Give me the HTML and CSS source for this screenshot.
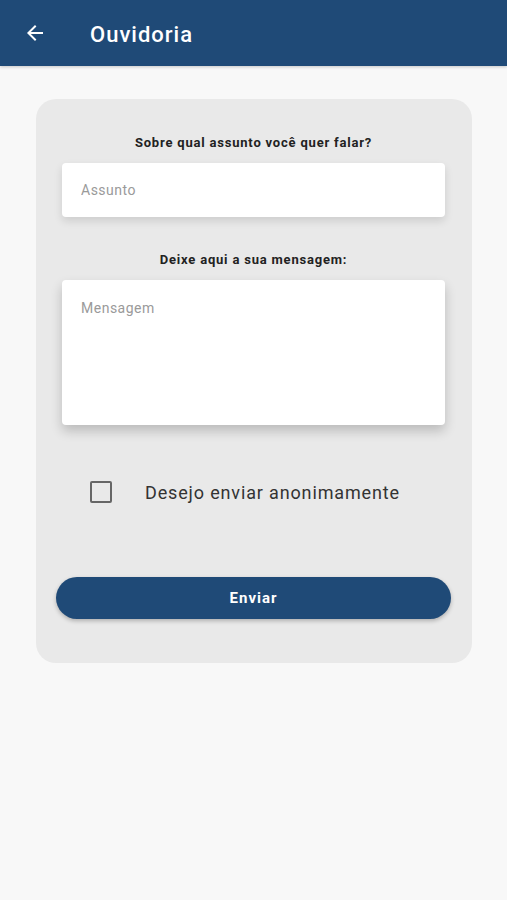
FILE: index.html
```html
<!DOCTYPE html>
<html lang="pt-BR">
<head>
  <meta charset="UTF-8">
  <meta name="viewport" content="width=device-width, initial-scale=1.0">
  <title>Ouvidoria</title>
  <link rel="stylesheet" href="styles.css">
</head>
<body>
  <header class="topbar">
    <button class="back" aria-label="Voltar">
      <svg width="24" height="24" viewBox="0 0 24 24"><path d="M20 11H7.83l5.59-5.59L12 4l-8 8 8 8 1.41-1.41L7.83 13H20v-2z" fill="#fff"/></svg>
    </button>
    <h1>Ouvidoria</h1>
  </header>

  <main class="content">
    <form class="card">
      <label class="label" for="assunto">Sobre qual assunto você quer falar?</label>
      <input class="field" type="text" id="assunto" placeholder="Assunto">

      <label class="label label-msg" for="mensagem">Deixe aqui a sua mensagem:</label>
      <textarea class="field area" id="mensagem" placeholder="Mensagem"></textarea>

      <label class="check">
        <span class="box"></span>
        <span>Desejo enviar anonimamente</span>
      </label>

      <button class="send" type="button">Enviar</button>
    </form>
  </main>
</body>
</html>
```

FILE: styles.css
```css
body {
  margin: 0;
  background: #f8f8f8;
  font-family: Roboto, "Noto Sans", sans-serif;
  color: #222;
}
.topbar {
  height: 66px;
  background: #1f4a77;
  display: flex;
  align-items: center;
  padding: 0 0 0 23px;
  box-shadow: 0 1px 3px rgba(0,0,0,0.2);
}
.back {
  background: none;
  border: none;
  padding: 0;
  width: 24px;
  height: 24px;
  display: flex;
}
.topbar h1 {
  margin: 2px 0 0 43px;
  color: #fff;
  font-size: 22px;
  font-weight: 500;
  letter-spacing: 1px;
}
.content {
  padding: 33px 35px 0 36px;
}
.card {
  background: #e9e9e9;
  border-radius: 20px;
  padding: 37px 27px 44px 26px;
  display: flex;
  flex-direction: column;
}
.label {
  text-align: center;
  font-size: 13px;
  font-weight: 700;
  color: #222;
  line-height: 14px;
  letter-spacing: 0.8px;
}
.label-msg {
  margin-top: 36px;
}
.field {
  margin-top: 13px;
  height: 54px;
  box-sizing: border-box;
  border: none;
  border-radius: 4px;
  background: #fff;
  padding: 0 19px;
  font-family: inherit;
  font-size: 14px;
  letter-spacing: 0.5px;
  color: #333;
  box-shadow: 0 4px 8px rgba(0,0,0,0.12);
  outline: none;
}
.field::placeholder {
  color: #9a9a9a;
}
.area {
  height: 145px;
  padding: 20px 19px;
  resize: none;
  box-shadow: 0 6px 12px rgba(0,0,0,0.2);
}
.check {
  display: flex;
  align-items: center;
  margin: 56px 0 0 28px;
  font-size: 18px;
  color: #333;
  letter-spacing: 0.85px;
}
.box {
  width: 18px;
  height: 18px;
  border: 2px solid #666;
  border-radius: 2px;
  margin-right: 33px;
}
.send {
  margin: 74px -6px 0 -6px;
  height: 42px;
  border: none;
  border-radius: 21px;
  background: #1f4a77;
  color: #fff;
  font-family: inherit;
  font-size: 15px;
  font-weight: 700;
  letter-spacing: 1px;
  box-shadow: 0 2px 4px rgba(0,0,0,0.25);
}
```
